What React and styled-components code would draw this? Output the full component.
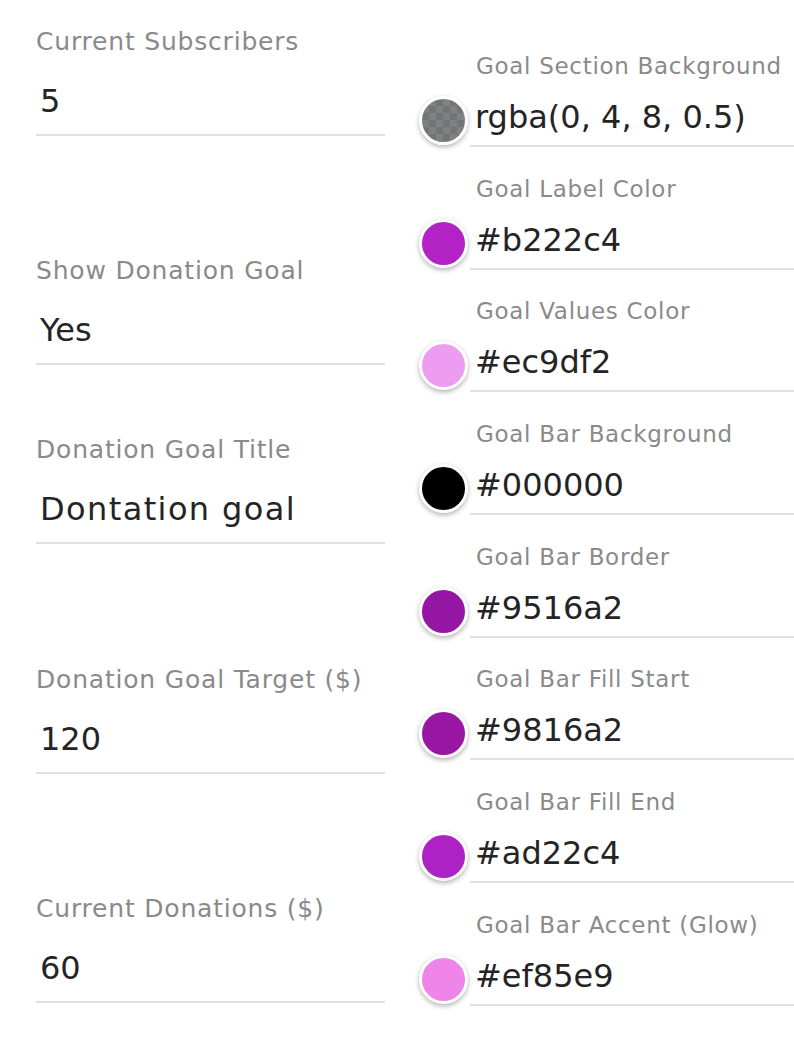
import React from 'react';
import styled, { createGlobalStyle } from 'styled-components';

const GlobalStyle = createGlobalStyle`
  html, body {
    margin: 0;
    padding: 0;
    background: #ffffff;
    overflow: hidden;
  }
  body {
    font-family: "DejaVu Sans", "Liberation Sans", sans-serif;
  }
`;

const Page = styled.div`
  display: flex;
  align-items: flex-start;
  width: 794px;
  height: 1059px;
  padding-left: 36px;
  box-sizing: border-box;
  overflow: hidden;
`;

const LeftColumn = styled.div`
  display: flex;
  flex-direction: column;
  width: 349px;
  flex-shrink: 0;
`;

const RightColumn = styled.div`
  display: flex;
  flex-direction: column;
  gap: 27.7px;
  flex: 1;
  margin-left: 34px;
  padding-top: 52px;
`;

const Field = styled.div`
  display: flex;
  flex-direction: column;
  margin-top: ${(p) => p.$top}px;
`;

const FieldLabel = styled.label`
  display: block;
  font-size: 25px;
  line-height: 30px;
  letter-spacing: 0.8px;
  color: #8a8a8a;
  white-space: nowrap;
`;

const FieldValue = styled.div`
  margin-top: 24px;
  padding: 0 0 13px 4px;
  font-size: 32px;
  line-height: 40px;
  color: #242424;
  border-bottom: 2px solid #e0e0e0;
  letter-spacing: ${(p) => (p.$wide ? '1.4px' : '0')};
`;

const ColorField = styled.div`
  display: flex;
  flex-direction: column;
`;

const ColorLabel = styled.label`
  display: block;
  margin-left: 57px;
  font-size: 23px;
  line-height: 28px;
  letter-spacing: 0.7px;
  color: #8a8a8a;
  white-space: nowrap;
`;

const ColorRow = styled.div`
  display: flex;
  align-items: flex-start;
  margin-top: 17px;
`;

const Swatch = styled.span`
  width: 43px;
  height: 43px;
  margin-top: -1px;
  flex-shrink: 0;
  border-radius: 50%;
  border: 3px solid #ffffff;
  box-shadow: 0 2px 5px rgba(0, 0, 0, 0.3);
  background: ${(p) =>
    p.$checker
      ? `linear-gradient(${p.$color}, ${p.$color}),
         repeating-conic-gradient(#ffffff 0 25%, #e4e4e4 0 50%) 0 0 / 14px 14px`
      : p.$color};
`;

const ColorInput = styled.div`
  flex: 1;
  margin-left: 2px;
  padding: 0 0 8px 5px;
  font-size: 32px;
  line-height: 40px;
  color: #242424;
  border-bottom: 2px solid #e0e0e0;
  white-space: nowrap;
`;

const fields = [
  { label: 'Current Subscribers', value: '5', top: 27 },
  { label: 'Show Donation Goal', value: 'Yes', top: 120 },
  { label: 'Donation Goal Title', value: 'Dontation goal', top: 70, wide: true },
  { label: 'Donation Goal Target ($)', value: '120', top: 121 },
  { label: 'Current Donations ($)', value: '60', top: 120 },
];

const colors = [
  { label: 'Goal Section Background', value: 'rgba(0, 4, 8, 0.5)', checker: true },
  { label: 'Goal Label Color', value: '#b222c4' },
  { label: 'Goal Values Color', value: '#ec9df2' },
  { label: 'Goal Bar Background', value: '#000000' },
  { label: 'Goal Bar Border', value: '#9516a2' },
  { label: 'Goal Bar Fill Start', value: '#9816a2' },
  { label: 'Goal Bar Fill End', value: '#ad22c4' },
  { label: 'Goal Bar Accent (Glow)', value: '#ef85e9' },
];

const App = () => {
  return (
    <>
      <GlobalStyle />
      <Page>
        <LeftColumn>
          {fields.map((f) => (
            <Field key={f.label} $top={f.top}>
              <FieldLabel>{f.label}</FieldLabel>
              <FieldValue $wide={f.wide}>{f.value}</FieldValue>
            </Field>
          ))}
        </LeftColumn>
        <RightColumn>
          {colors.map((c) => (
            <ColorField key={c.label}>
              <ColorLabel>{c.label}</ColorLabel>
              <ColorRow>
                <Swatch $color={c.value} $checker={c.checker} />
                <ColorInput>{c.value}</ColorInput>
              </ColorRow>
            </ColorField>
          ))}
        </RightColumn>
      </Page>
    </>
  );
};

export default App;
